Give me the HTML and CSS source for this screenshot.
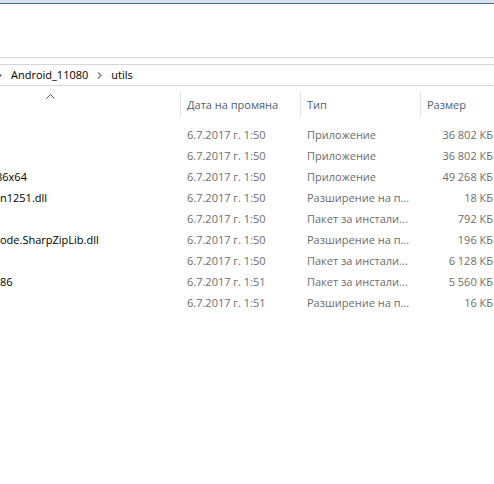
FILE: index.html
```html
<!DOCTYPE html>
<html lang="bg">
<head>
<meta charset="utf-8">
<meta name="viewport" content="width=device-width, initial-scale=1">
<title>utils</title>
<link rel="stylesheet" href="styles.css">
</head>
<body>
<header class="ribbon"></header>
<nav class="address">
  <svg class="chevron" viewBox="0 0 5 7"><path d="M1 .5 4 3.5 1 6.5"/></svg>
  <a class="crumb" href="#">Android_11080</a>
  <svg class="chevron" viewBox="0 0 5 7"><path d="M1 .5 4 3.5 1 6.5"/></svg>
  <a class="crumb" href="#">utils</a>
</nav>
<main>
  <table class="files">
    <colgroup><col class="col-name"><col class="col-date"><col class="col-type"><col></colgroup>
    <thead>
      <tr>
        <th class="sorted"><svg class="sort" viewBox="0 0 9 5"><path d="M.5 4.5 4.5 .5 8.5 4.5"/></svg></th>
        <th><span class="label">Дата на промяна</span></th>
        <th><span class="label">Тип</span></th>
        <th><span class="label">Размер</span></th>
      </tr>
    </thead>
    <tbody>
      <tr><td class="name"></td><td>6.7.2017 г. 1:50</td><td>Приложение</td><td class="size">36 802 КБ</td></tr>
      <tr><td class="name"></td><td>6.7.2017 г. 1:50</td><td>Приложение</td><td class="size">36 802 КБ</td></tr>
      <tr><td class="name"><span class="clip">86x64</span></td><td>6.7.2017 г. 1:50</td><td>Приложение</td><td class="size">49 268 КБ</td></tr>
      <tr><td class="name">n1251.dll</td><td>6.7.2017 г. 1:50</td><td>Разширение на п...</td><td class="size">18 КБ</td></tr>
      <tr><td class="name"></td><td>6.7.2017 г. 1:50</td><td>Пакет за инстали...</td><td class="size">792 КБ</td></tr>
      <tr><td class="name">ode.SharpZipLib.dll</td><td>6.7.2017 г. 1:50</td><td>Разширение на п...</td><td class="size">196 КБ</td></tr>
      <tr><td class="name"></td><td>6.7.2017 г. 1:50</td><td>Пакет за инстали...</td><td class="size">6 128 КБ</td></tr>
      <tr><td class="name">86</td><td>6.7.2017 г. 1:51</td><td>Пакет за инстали...</td><td class="size">5 560 КБ</td></tr>
      <tr><td class="name"></td><td>6.7.2017 г. 1:51</td><td>Разширение на п...</td><td class="size">16 КБ</td></tr>
    </tbody>
  </table>
</main>
</body>
</html>
```
FILE: styles.css
```css
* { box-sizing: border-box; }

body {
  margin: 0;
  background: #fff;
  color: #000;
  font: 11px/20px "Open Sans", "Noto Sans", sans-serif;
  overflow-x: hidden;
}

.ribbon {
  height: 58px;
  border-bottom: 1px solid #d5d6d7;
  background: linear-gradient(#dfe0ee 0 2px, #cfe2f2 2px 3px, #3c7398 3px 4px, #fff 4px);
}

.address {
  display: flex;
  align-items: center;
  height: 22px;
  margin-top: 6px;
  border: solid #d5d6d7;
  border-width: 1px 0;
}

.crumb {
  margin: 0 9px;
  color: #000;
  text-decoration: none;
}

.chevron {
  flex: none;
  width: 5px;
  height: 7px;
  fill: none;
  stroke: #777;
  stroke-width: 1.3;
}

.chevron:first-child { margin-left: -3px; }

.files {
  width: 100%;
  table-layout: fixed;
  border-collapse: collapse;
}

.col-name { width: 180px; }
.col-date, .col-type { width: 120px; }

th {
  height: 38px;
  padding: 0;
  color: #4c607a;
  font-weight: 400;
  text-align: left;
}

.label {
  display: block;
  padding: 3px 0 3px 6px;
  border-left: 1px solid #e2e3e4;
}

.sorted { vertical-align: top; }

.sort {
  display: block;
  width: 9px;
  height: 5px;
  margin: 8px 0 0 46px;
  fill: none;
  stroke: #555;
}

td {
  height: 21px;
  padding: 0 0 0 7px;
  color: #6d6d6d;
  white-space: nowrap;
}

.name {
  padding: 0;
  color: #000;
  overflow: hidden;
}

.clip { margin-left: -4px; }

.size {
  padding: 0 1px 0 0;
  text-align: right;
}
```
